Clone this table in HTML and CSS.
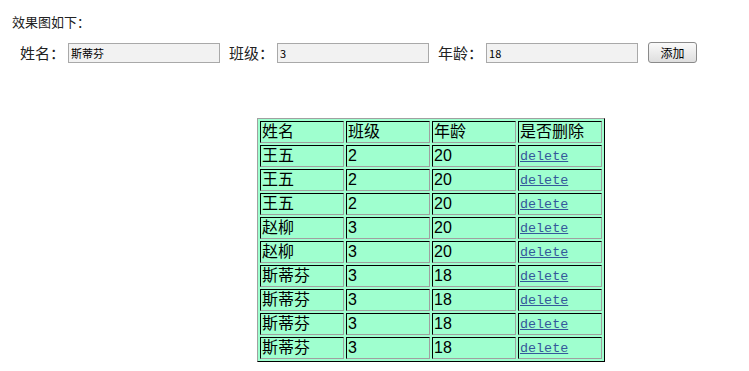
FILE: index.html
```html
<!DOCTYPE html>
<html>

<head>
    <title>添加学生</title>
    <link rel="stylesheet" href="styles.css">
</head>

<body>
    <p class="tip">效果图如下：</p>
    <div class="form">
        <label for="name">姓名：</label>
        <input type="text" id="name" value="斯蒂芬">
        <label for="grade">班级：</label>
        <input type="text" id="grade" value="3">
        <label for="age">年龄：</label>
        <input type="text" id="age" value="18">
        <button>添加</button>
    </div>

    <table class="list">
        <tr><td>姓名</td><td>班级</td><td>年龄</td><td>是否删除</td></tr>
        <tr><td>王五</td><td>2</td><td>20</td><td><a href="#">delete</a></td></tr>
        <tr><td>王五</td><td>2</td><td>20</td><td><a href="#">delete</a></td></tr>
        <tr><td>王五</td><td>2</td><td>20</td><td><a href="#">delete</a></td></tr>
        <tr><td>赵柳</td><td>3</td><td>20</td><td><a href="#">delete</a></td></tr>
        <tr><td>赵柳</td><td>3</td><td>20</td><td><a href="#">delete</a></td></tr>
        <tr><td>斯蒂芬</td><td>3</td><td>18</td><td><a href="#">delete</a></td></tr>
        <tr><td>斯蒂芬</td><td>3</td><td>18</td><td><a href="#">delete</a></td></tr>
        <tr><td>斯蒂芬</td><td>3</td><td>18</td><td><a href="#">delete</a></td></tr>
        <tr><td>斯蒂芬</td><td>3</td><td>18</td><td><a href="#">delete</a></td></tr>
    </table>
</body>
</html>
```

FILE: styles.css
```css
body{
    margin: 0;
    padding: 14px 0 0 12px;
    font-family: "Noto Sans CJK SC", sans-serif;
    color: #222;
}

.tip{
    margin: 0;
    font-size: 13px;
    line-height: 16px;
}

.form{
    display: flex;
    align-items: center;
    margin: 12px 0 0 8px;
    font-size: 15px;
}

.form label{
    margin-right: 3px;
}

.form input{
    width: 146px;
    height: 18px;
    padding: 0 2px;
    margin-right: 9px;
    border: 1px solid #a9a9a9;
    background-color: #f2f2f2;
    font-family: "Noto Sans CJK SC", sans-serif;
    font-size: 11px;
    color: #000;
}

.form button{
    width: 49px;
    height: 21px;
    padding: 0;
    margin-left: 1px;
    border: 1px solid #8a8a8a;
    border-radius: 3px;
    background: linear-gradient(#fafafa, #dedede);
    font-family: "Noto Sans CJK SC", sans-serif;
    font-size: 12px;
}

.list{
    margin: 55px 0 0 245px;
    border-collapse: separate;
    border-spacing: 2px;
    border: 1px solid;
    border-color: #a0a0a0 #000 #000 #a0a0a0;
    background-color: #9fffcf;
    font-family: "Liberation Sans", "Noto Sans CJK SC", sans-serif;
    font-size: 16px;
    color: #000;
}

.list td{
    width: 80px;
    height: 20px;
    padding: 0 1px;
    line-height: 16px;
    vertical-align: middle;
    border: 1px solid;
    border-color: #000 #a0a0a0 #a0a0a0 #000;
}

.list a{
    display: inline-block;
    line-height: 18px;
    vertical-align: top;
    margin-top: 2px;
    color: #34589a;
    font-family: "Liberation Mono", monospace;
    font-size: 13.4px;
}
```
